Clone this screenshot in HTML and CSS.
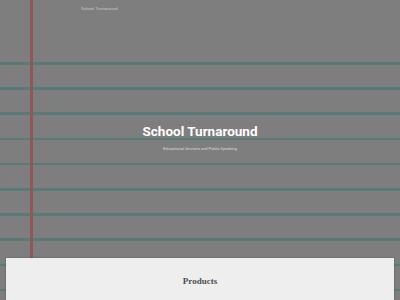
FILE: index.html
```html
<!DOCTYPE html>
<html lang="en">
<head>
  <meta charset="UTF-8">
  <meta name="viewport" content="width=device-width, initial-scale=1.0">
  <title>School Turnaround</title>
  <link rel="stylesheet" href="styles.css">
</head>
<body>
  <div class="topbar">School Turnaround</div>

  <header class="hero">
    <h1>School Turnaround</h1>
    <p class="tagline">Educational Services and Public Speaking</p>
  </header>

  <section class="card">
    <h2>Products</h2>
  </section>
</body>
</html>
```

FILE: styles.css
```css
* { margin: 0; padding: 0; box-sizing: border-box; }
body {
  font-family: Roboto, "Liberation Sans", sans-serif;
  min-height: 300px;
  background-color: #7e7e7e;
  background-image:
    linear-gradient(to right, transparent 30px, #8f5858 30px, #8f5858 33px, transparent 33px),
    repeating-linear-gradient(to bottom, #587b78 0, #587b78 2.5px, transparent 2.5px, transparent 25.2px);
  background-size: 100% 100%, 100% 1000px;
  background-position: 0 0, 0 62.3px;
  background-repeat: no-repeat, no-repeat;
}
.topbar { height: 18px; padding-left: 81px; font-size: 4.4px; line-height: 18px; color: #c8c8c8; }
.hero { height: 240px; padding-top: 105px; text-align: center; color: #fff; }
.hero h1 { font-size: 13.5px; font-weight: 700; line-height: 16px; }
.tagline { margin-top: 7px; font-size: 4px; line-height: 6px; color: #dcdcdc; }
.card { margin: 0 6px; min-height: 42px; padding-top: 18px; background: #eeeeee; box-shadow: 0 0 2px rgba(0,0,0,0.3); text-align: center; }
.card h2 { font-family: "Liberation Serif", serif; font-size: 9px; font-weight: 700; line-height: 10px; color: #4a4c55; }
```
